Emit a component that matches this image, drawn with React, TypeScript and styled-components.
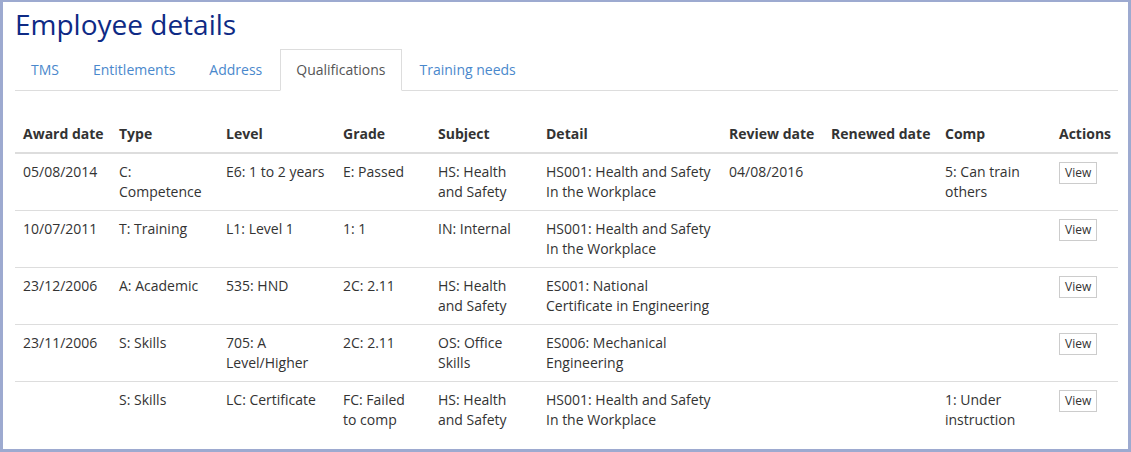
import React from 'react';
import styled, { createGlobalStyle } from 'styled-components';

type Qualification = {
    awardDate: string;
    type: string;
    level: string;
    grade: string;
    subject: string;
    detail: string;
    reviewDate: string;
    renewedDate: string;
    comp: string;
};

const tabs = ['TMS', 'Entitlements', 'Address', 'Qualifications', 'Training needs'];
const activeTab = 'Qualifications';

const columns: ReadonlyArray<{ label: string; width: number }> = [
    { label: 'Award date', width: 96 },
    { label: 'Type', width: 107 },
    { label: 'Level', width: 117 },
    { label: 'Grade', width: 95 },
    { label: 'Subject', width: 108 },
    { label: 'Detail', width: 183 },
    { label: 'Review date', width: 102 },
    { label: 'Renewed date', width: 114 },
    { label: 'Comp', width: 114 },
    { label: 'Actions', width: 67 },
];

const rows: Qualification[] = [
    {
        awardDate: '05/08/2014',
        type: 'C: Competence',
        level: 'E6: 1 to 2 years',
        grade: 'E: Passed',
        subject: 'HS: Health and Safety',
        detail: 'HS001: Health and Safety In the Workplace',
        reviewDate: '04/08/2016',
        renewedDate: '',
        comp: '5: Can train others',
    },
    {
        awardDate: '10/07/2011',
        type: 'T: Training',
        level: 'L1: Level 1',
        grade: '1: 1',
        subject: 'IN: Internal',
        detail: 'HS001: Health and Safety In the Workplace',
        reviewDate: '',
        renewedDate: '',
        comp: '',
    },
    {
        awardDate: '23/12/2006',
        type: 'A: Academic',
        level: '535: HND',
        grade: '2C: 2.11',
        subject: 'HS: Health and Safety',
        detail: 'ES001: National Certificate in Engineering',
        reviewDate: '',
        renewedDate: '',
        comp: '',
    },
    {
        awardDate: '23/11/2006',
        type: 'S: Skills',
        level: '705: A Level/Higher',
        grade: '2C: 2.11',
        subject: 'OS: Office Skills',
        detail: 'ES006: Mechanical Engineering',
        reviewDate: '',
        renewedDate: '',
        comp: '',
    },
    {
        awardDate: '',
        type: 'S: Skills',
        level: 'LC: Certificate',
        grade: 'FC: Failed to comp',
        subject: 'HS: Health and Safety',
        detail: 'HS001: Health and Safety In the Workplace',
        reviewDate: '',
        renewedDate: '',
        comp: '1: Under instruction',
    },
];

const App = () => (
    <>
        <GlobalStyle />
        <Frame>
            <Title>Employee details</Title>
            <TabList>
                {tabs.map((tab) => (
                    <Tab key={tab} active={tab === activeTab}>
                        {tab}
                    </Tab>
                ))}
            </TabList>
            <Table>
                <colgroup>
                    {columns.map((col) => (
                        <col key={col.label} style={{ width: col.width }} />
                    ))}
                </colgroup>
                <thead>
                    <tr>
                        {columns.map((col) => (
                            <HeadCell key={col.label}>{col.label}</HeadCell>
                        ))}
                    </tr>
                </thead>
                <tbody>
                    {rows.map((row, i) => (
                        <Row key={i}>
                            <Cell>{row.awardDate}</Cell>
                            <Cell>{row.type}</Cell>
                            <Cell>{row.level}</Cell>
                            <GradeCell>{row.grade}</GradeCell>
                            <Cell>{row.subject}</Cell>
                            <Cell>{row.detail}</Cell>
                            <Cell>{row.reviewDate}</Cell>
                            <Cell>{row.renewedDate}</Cell>
                            <Cell>{row.comp}</Cell>
                            <Cell>
                                <ViewButton type="button">View</ViewButton>
                            </Cell>
                        </Row>
                    ))}
                </tbody>
            </Table>
        </Frame>
    </>
);

const GlobalStyle = createGlobalStyle`
    html, body {
        margin: 0;
        padding: 0;
        background: #fff;
    }
    body {
        font-family: 'Open Sans', 'Liberation Sans', sans-serif;
        font-size: 14px;
        line-height: 20px;
        color: #333;
    }
`;

const Frame = styled.div`
    box-sizing: border-box;
    width: 1131px;
    height: 452px;
    padding: 0 10px 0 12px;
    border: 3px solid #9daad0;
    border-top-width: 2px;
    background: #fff;
    overflow: hidden;
`;

const Title = styled.h1`
    margin: 7px 0 0;
    font-size: 28px;
    font-weight: 400;
    line-height: 30px;
    color: #0e2a85;
`;

const TabList = styled.ul`
    display: flex;
    margin: 10px 0 0;
    padding: 0;
    list-style: none;
    border-bottom: 1px solid #ddd;
`;

const Tab = styled.li<{ active: boolean }>`
    margin: 0 2px -1px 0;
    padding: 10px 15px;
    line-height: 20px;
    border: 1px solid ${({ active }) => (active ? '#ddd' : 'transparent')};
    border-bottom-color: ${({ active }) => (active ? '#fff' : 'transparent')};
    background: ${({ active }) => (active ? '#fff' : 'transparent')};
    color: ${({ active }) => (active ? '#555' : '#4a88cc')};
    cursor: pointer;
`;

const Table = styled.table`
    width: 1103px;
    margin-top: 25px;
    table-layout: fixed;
    border-collapse: collapse;
    border-spacing: 0;
`;

const HeadCell = styled.th`
    padding: 8px;
    text-align: left;
    font-weight: 700;
    vertical-align: bottom;
    border-bottom: 2px solid #ddd;
    white-space: nowrap;
`;

const Row = styled.tr`
    & + & td {
        border-top: 1px solid #ddd;
    }
`;

const Cell = styled.td`
    padding: 8px;
    height: 40px;
    vertical-align: top;
`;

const GradeCell = styled(Cell)`
    padding-right: 14px;
`;

const ViewButton = styled.button`
    box-sizing: border-box;
    height: 22px;
    padding: 0 5px;
    font-family: 'Open Sans', 'Liberation Sans', sans-serif;
    font-size: 12px;
    line-height: 18px;
    color: #333;
    background: #fff;
    border: 1px solid #ccc;
    border-radius: 0;
    cursor: pointer;
`;

export default App;
